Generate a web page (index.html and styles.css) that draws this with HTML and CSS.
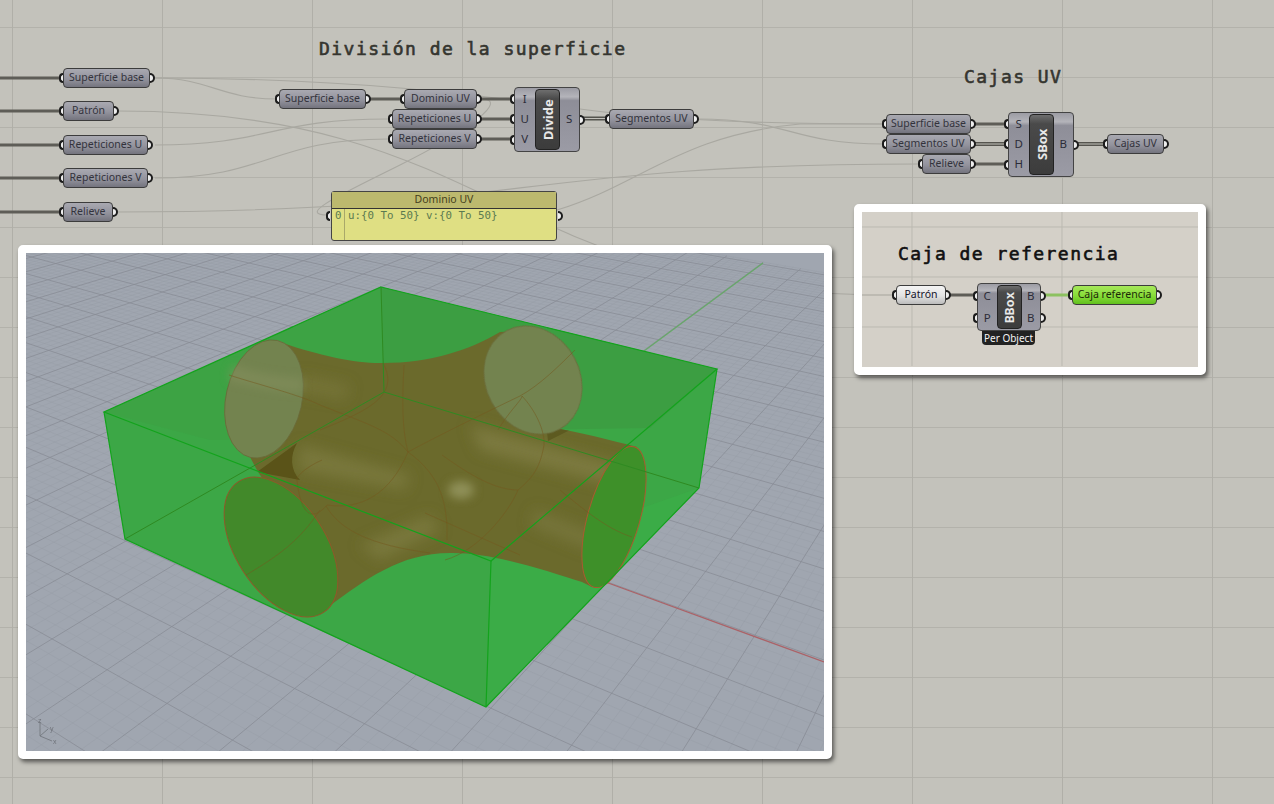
FILE: index.html
```html
<!DOCTYPE html>
<html lang="es">
<head>
    <meta charset="UTF-8">
    <title>Cajas UV</title>
    <link rel="stylesheet" href="styles.css">
</head>
<body>
<div class="canvas">
    <svg class="wires" width="1274" height="804" viewBox="0 0 1274 804">
        <!-- faint wires -->
        <g class="wire-faint">
            <path d="M155 78 C210 78 220 99 277 99"/>
            <path d="M155 78 C350 78 480 95 580 109 C660 120 760 124 884 124"/>
            <path d="M118 111 C500 111 500 295 892 295"/>
            <path d="M155 145 C270 145 270 119 388 119"/>
            <path d="M155 178 C270 178 270 139 388 139"/>
            <path d="M118 212 C520 212 520 164 918 164"/>
            <path d="M481 99 C510 99 470 130 400 165 C340 195 296 215 328 215"/>
            <path d="M698 119 C790 119 790 144 884 144"/>
            <path d="M557 210 C640 185 680 135 800 124 L884 124"/>
        </g>
        <!-- thick wires -->
        <g class="wire-thick">
            <path d="M0 78 H60 M0 111 H60 M0 145 H60 M0 178 H60 M0 212 H60"/>
            <path d="M369 99 H401 M481 99 H511 M481 119 H511 M481 139 H511"/>
            <path d="M975 124 H1005 M975 164 H1005"/>
        </g>
        <g class="wire-list">
            <path d="M583 118.500 H606 M975 144 H1005 M1077 144 H1104"/>
        </g>
        <g class="wire-list-core">
            <path d="M583 118.500 H606 M975 144 H1005 M1077 144 H1104"/>
        </g>
    </svg>

    <h2 class="title title-div">División de la superficie</h2>
    <h2 class="title title-cajas">Cajas UV</h2>

    <div class="node n1">Superficie base</div>
    <div class="node n2">Patrón</div>
    <div class="node n3">Repeticiones U</div>
    <div class="node n4">Repeticiones V</div>
    <div class="node n5">Relieve</div>

    <div class="node n6">Superficie base</div>
    <div class="node n7">Dominio UV</div>
    <div class="node n8">Repeticiones U</div>
    <div class="node n9">Repeticiones V</div>
    <div class="node n10">Segmentos UV</div>

    <div class="comp comp-divide">
        <div class="col col-in"><span class="pin">I</span><span class="pin">U</span><span class="pin">V</span></div>
        <div class="pill">Divide</div>
        <div class="col col-out"><span class="pin">S</span></div>
    </div>

    <div class="yellow">
        <div class="yellow-head">Dominio UV</div>
        <div class="yellow-body"><span class="yellow-num">0</span> u:{0 To 50} v:{0 To 50}</div>
    </div>

    <div class="node n11">Superficie base</div>
    <div class="node n12">Segmentos UV</div>
    <div class="node n13">Relieve</div>
    <div class="node n14">Cajas UV</div>

    <div class="comp comp-sbox">
        <div class="col col-in"><span class="pin">S</span><span class="pin">D</span><span class="pin">H</span></div>
        <div class="pill">SBox</div>
        <div class="col col-out"><span class="pin">B</span></div>
    </div>

    <!-- recuadro caja de referencia -->
    <div class="shot shot-ref">
        <svg class="wires" width="336" height="154" viewBox="862 212 336 154">
            <g class="wire-ref-grid">
                <path d="M862 227 H1198 M862 277 H1198 M862 327 H1198 M912 212 V366 M1062 212 V366"/>
            </g>
            <path class="wire-faint" d="M862 295 H892"/>
            <path class="wire-dark" d="M950 295 H974"/>
            <path class="wire-green" d="M1044 295 H1069"/>
        </svg>
        <h2 class="title title-ref">Caja de referencia</h2>
        <div class="node node-light n15">Patrón</div>
        <div class="comp comp-bbox">
            <div class="col col-in"><span class="pin">C</span><span class="pin">P</span></div>
            <div class="pill pill-bbox">BBox</div>
            <div class="col col-out"><span class="pin">B</span><span class="pin">B</span></div>
        </div>
        <div class="per-object">Per Object</div>
        <div class="node node-green n16">Caja referencia</div>
    </div>

    <!-- vista de rhino -->
    <div class="shot shot-view">
        <svg class="view" width="798" height="498" viewBox="26 253 798 498">
            <defs>
                <filter id="soft" x="-50%" y="-50%" width="200%" height="200%"><feGaussianBlur stdDeviation="7"/></filter>
                <filter id="soft2" x="-50%" y="-50%" width="200%" height="200%"><feGaussianBlur stdDeviation="5"/></filter>
                <clipPath id="body-clip">
                    <path d="M283 343 C320 356 360 364 383 363 C430 363 470 350 500 332 L540 330 L582 380 L548 427 C580 432 610 440 637 447 L640 500 L592 587 L582 582 C545 570 490 552 450 553 C400 553 365 580 328 607 L295 560 L270 510 L262 478 L257 470 L250 457 L235 420 L240 360 Z"/>
                </clipPath>
            </defs>
            <rect x="26" y="253" width="798" height="498" fill="#a0a6b0"/>
            <g id="floor-minor" class="grid-minor"></g>
            <g id="floor-major" class="grid-major"></g>
            <path class="axis-red" d="M600 580 L824 662"/>
            <path class="axis-green" d="M640 354 L763 263"/>

            <!-- caja -->
            <path fill="#3ca746" d="M381 287 L717 369 L699 488 L486 707 L125 539 L104 412 Z"/>
            <path fill="#3c9e42" d="M381 287 L717 369 L650 428 L520 430 L384 392 Z"/>
            <path fill="#3d9f43" d="M381 287 L384 392 L300 440 L210 440 L104 412 Z" opacity=".45"/>
            <path fill="#3bae47" d="M491 561 L699 488 L486 707 Z" opacity=".8"/>

            <!-- cuerpo de los tubos -->
            <path class="tube-body" d="M283 343 C320 356 360 364 383 363 C430 363 470 350 500 332 L540 330 L582 380 L548 427 C580 432 610 440 637 447 L640 500 L592 587 L582 582 C545 570 490 552 450 553 C400 553 365 580 328 607 L295 560 L270 510 L262 478 L257 470 L250 457 L235 420 L240 360 Z"/>
            <g clip-path="url(#body-clip)">
                <g filter="url(#soft)" fill="#7f7d42">
                    <path d="M300 445 L410 475 L405 490 L298 470 Z" opacity=".7"/>
                    <path d="M470 425 L640 470 L630 490 L480 450 Z" opacity=".85"/>
                    <path d="M360 545 L430 515 L440 530 L380 560 Z" opacity=".7"/>
                    <path d="M300 375 L350 385 L345 400 L300 392 Z" opacity=".5"/>
                    <path d="M535 510 L600 535 L590 550 L530 525 Z" opacity=".6"/>
                </g>
                <ellipse cx="461" cy="490" rx="13" ry="9" fill="#8f9058" filter="url(#soft2)"/>
                <path d="M297 443 C290 455 290 470 300 480 L257 472 Z" fill="#5a5318"/>
                <path d="M545 412 L580 425 L548 441 Z" fill="#5d5a20"/>
            </g>

            <!-- bocas -->
            <ellipse class="mouth-back" cx="264" cy="399" rx="38" ry="60" transform="rotate(13 264 399)"/>
            <ellipse class="mouth-back" cx="533" cy="380" rx="47" ry="56" transform="rotate(-28 533 380)"/>
            <ellipse class="mouth-left" cx="281" cy="547" rx="45" ry="78" transform="rotate(-33 281 547)"/>
            <ellipse class="mouth-right" cx="614" cy="517" rx="26" ry="73" transform="rotate(16 614 517)"/>
            <path d="M232 365 C250 372 280 378 303 378 L303 392 C280 392 250 385 228 380 Z" fill="#889260" opacity=".5" filter="url(#soft2)"/>

            <!-- curvas de la superficie -->
            <g class="tube-lines">
                <path d="M229 375 C260 385 300 395 320 405 C370 425 390 430 408 452"/>
                <path d="M320 430 C370 410 400 395 383 363"/>
                <path d="M404 365 C402 400 402 430 408 452 C440 475 445 500 447 525"/>
                <path d="M408 452 C430 440 470 420 520 396 C540 385 560 365 575 350"/>
                <path d="M498 430 C510 410 522 400 522 396 C535 410 545 430 544 445 C540 470 530 480 518 490 C495 490 470 475 442 455"/>
                <path d="M322 460 C300 470 295 480 297 480 C300 510 310 525 327 505 C360 510 390 495 408 452"/>
                <path d="M326 506 C340 530 370 545 430 553"/>
                <path d="M518 490 C510 510 480 550 445 560"/>
                <path d="M425 513 L520 555"/>
                <path d="M246 575 C280 555 300 540 320 510"/>
                <path d="M560 490 C590 515 610 530 632 537"/>
                <path d="M447 525 L447 540" />
            </g>

            <!-- aristas -->
            <g class="box-inner">
                <path d="M381 287 L384 392 M384 392 L125 539 M384 392 L699 488"/>
            </g>
            <g class="box-edge">
                <path d="M381 287 L717 369 L491 561 L104 412 Z"/>
                <path d="M104 412 L125 539 L486 707 L699 488 L717 369 M491 561 L486 707"/>
            </g>

            <!-- eje -->
            <g class="axes">
                <path d="M40 736 V722 M40 736 L48 729 M40 736 L52 741"/>
                <text x="38" y="723">z</text>
                <text x="50" y="731">y</text>
                <text x="53" y="744">x</text>
            </g>
        </svg>
    </div>
</div>
<script src="grid.js"></script>
</body>
</html>
```
FILE: styles.css
```css
html, body {
    margin: 0;
    padding: 0;
    overflow: hidden;
    background: #c3c2bb;
}

.canvas {
    position: relative;
    width: 1274px;
    height: 804px;
    overflow: hidden;
    filter: blur(0.35px);
    font-family: "Noto Sans", Arial, sans-serif;
    background-color: #c3c2bb;
    background-image:
        linear-gradient(to right, #b0afa8 1px, transparent 1px),
        linear-gradient(to bottom, #b3b2ab 1px, transparent 1px);
    background-size: 150px 100%, 100% 50px;
    background-position: 12px 0, 0 27px;
}

.wires {
    position: absolute;
    left: 0;
    top: 0;
}

.wires path, .wire-faint path, .wire-faint {
    fill: none;
}

.wire-faint {
    stroke: #a9a8a1;
    stroke-width: 1.1;
}

.wire-thick path, .wire-dark {
    stroke: #5e5d57;
    stroke-width: 3;
}

.wire-list path {
    stroke: #55544e;
    stroke-width: 4;
}

.wire-list-core path {
    stroke: #c3c2bb;
    stroke-width: 1;
}

.wire-green {
    stroke: #8cc160;
    stroke-width: 3;
}

.wire-ref-grid path {
    stroke: #bbb9b1;
    stroke-width: 1;
}

.title {
    position: absolute;
    margin: 0;
    font-family: "DejaVu Sans Mono", monospace;
    font-size: 18px;
    font-weight: normal;
    line-height: 20px;
    letter-spacing: 1.46px;
    -webkit-text-stroke: 0.6px currentColor;
    color: #35352f;
    white-space: nowrap;
}

.title-div { left: 319px; top: 39px; }
.title-cajas { left: 964px; top: 67px; }
.title-ref { left: 36px; top: 32px; color: #111; }

/* nodos */
.node {
    position: absolute;
    box-sizing: border-box;
    height: 20px;
    padding-bottom: 2px;
    display: flex;
    align-items: center;
    justify-content: center;
    font-size: 10.5px;
    color: #33333c;
    white-space: nowrap;
    border: 1px solid #3c3c3c;
    border-radius: 4px;
    background: linear-gradient(#a9a9b1, #93939d 55%, #74747e);
}

.node::before, .node::after {
    content: "";
    position: absolute;
    top: 3.500px;
    width: 2.500px;
    height: 6px;
    background: #eee;
    border: 2px solid #1c1c1c;
}

.node::before {
    left: -5.500px;
    border-right: none;
    border-radius: 5px 0 0 5px;
}

.node::after {
    right: -5.500px;
    border-left: none;
    border-radius: 0 5px 5px 0;
}

.node-light {
    background: linear-gradient(#f4f4f4, #e2e2e2 55%, #bcbcbc);
    color: #14142a;
}

.node-green {
    background: linear-gradient(#a6e85a, #86dc38 55%, #62c01e);
    color: #1c2a08;
}

.n1 { left: 63px; top: 68px; width: 87px; }
.n2 { left: 63px; top: 101px; width: 51px; }
.n3 { left: 63px; top: 135px; width: 85px; }
.n4 { left: 63px; top: 168px; width: 85px; }
.n5 { left: 63px; top: 202px; width: 50px; }
.n6 { left: 279px; top: 89px; width: 87px; }
.n7 { left: 404px; top: 89px; width: 73px; }
.n8 { left: 392px; top: 109px; width: 85px; }
.n9 { left: 392px; top: 129px; width: 85px; }
.n10 { left: 609px; top: 109px; width: 85px; }
.n11 { left: 886px; top: 114px; width: 85px; }
.n12 { left: 886px; top: 134px; width: 85px; }
.n13 { left: 922px; top: 154px; width: 49px; }
.n14 { left: 1107px; top: 134px; width: 57px; }
.n15 { left: 34px; top: 73px; width: 50px; }
.n16 { left: 210px; top: 73px; width: 85px; }

/* componentes */
.comp {
    position: absolute;
    box-sizing: border-box;
    display: flex;
    font-size: 11.500px;
    color: #2c2c38;
    border: 1px solid #444;
    border-radius: 4px;
    background: linear-gradient(#9c9ca4, #b4b4ba 14%, #8e8e98 20%, #9b9ba5 100%);
}

.comp-divide { left: 514px; top: 87px; width: 66px; height: 65px; }
.comp-sbox { left: 1008px; top: 112px; width: 66px; height: 65px; }
.comp-bbox { left: 115px; top: 71px; width: 64px; height: 48px; z-index: 1; }

.col {
    display: flex;
    flex-direction: column;
    justify-content: space-around;
    align-items: center;
    flex: 1;
    padding-bottom: 2px;
}

.pin {
    position: relative;
    display: block;
    width: 100%;
    text-align: center;
}

.pin::before {
    content: "";
    position: absolute;
    top: 3.500px;
    width: 2.500px;
    height: 6px;
    background: #eee;
    border: 2px solid #1c1c1c;
}

.col-in .pin::before {
    left: -5.500px;
    border-right: none;
    border-radius: 5px 0 0 5px;
}

.col-out .pin::before {
    right: -5.500px;
    border-left: none;
    border-radius: 0 5px 5px 0;
}

.pill {
    box-sizing: border-box;
    width: 25px;
    margin: 1px 0;
    display: flex;
    align-items: center;
    justify-content: center;
    writing-mode: vertical-rl;
    transform: rotate(180deg);
    font-size: 13px;
    font-weight: bold;
    color: #e8e8e8;
    border: 1px solid #222;
    border-radius: 4px;
    background: linear-gradient(#3c3c3c, #4a4a4a 85%, #6e6e6e);
}

.pill-bbox { font-family: "DejaVu Sans Mono", monospace; font-size: 13px; }

.per-object {
    position: absolute;
    left: 120px;
    top: 119px;
    width: 53px;
    height: 14px;
    line-height: 14px;
    text-align: center;
    font-size: 10px;
    color: #f4f4f4;
    background: #222;
    border-radius: 0 0 4px 4px;
}

/* panel amarillo */
.yellow {
    position: absolute;
    left: 331px;
    top: 191px;
    width: 226px;
    height: 50px;
    box-sizing: border-box;
    border: 1px solid #444;
    border-radius: 3px;
    background: linear-gradient(to right, #dfdf83 12px, #a9a86a 12px, #a9a86a 13px, #dfdf83 13px);
}

.yellow::before, .yellow::after {
    content: "";
    position: absolute;
    top: 19px;
    width: 2.500px;
    height: 6px;
    background: #eee;
    border: 2px solid #1c1c1c;
}

.yellow::before { left: -6.500px; border-right: none; border-radius: 5px 0 0 5px; }
.yellow::after { right: -6.500px; border-left: none; border-radius: 0 5px 5px 0; }

.yellow-head {
    height: 16px;
    line-height: 15px;
    text-align: center;
    font-size: 10.500px;
    color: #45401c;
    background: #bcb96e;
    border-bottom: 1px solid #333;
}

.yellow-body {
    padding: 0 0 0 3px;
    font-family: "DejaVu Sans Mono", monospace;
    font-size: 10.800px;
    line-height: 14px;
    color: #5b7a50;
    white-space: pre;
}

/* recuadros */
.shot {
    position: absolute;
    box-sizing: border-box;
    border: 8px solid #fff;
    border-radius: 5px;
    box-shadow: 2px 3px 4px rgba(0, 0, 0, 0.55);
}

.shot-ref {
    left: 854px;
    top: 204px;
    width: 352px;
    height: 171px;
    background: #d4d0c8;
}

.shot-ref .wire-faint { stroke: #a9a8a1; }

.shot-view {
    left: 18px;
    top: 245px;
    width: 814px;
    height: 514px;
    background: #a0a6b0;
}

.view {
    display: block;
}

.grid-minor line {
    stroke: #959aa4;
    stroke-width: 0.6;
    stroke-opacity: 0.55;
}

.grid-major line {
    stroke: #888b94;
    stroke-width: 0.9;
    stroke-opacity: 0.85;
}

.axis-red {
    fill: none;
    stroke: #ab6368;
    stroke-width: 1.300;
}

.axis-green {
    fill: none;
    stroke: #67a869;
    stroke-width: 1.300;
}

.tube-body { fill: #6b6a2c; }

.mouth-back {
    fill: #73834f;
    stroke: #6a6a3a;
    stroke-width: 0.8;
}

.mouth-left {
    fill: #42892a;
    stroke: #8e5a2a;
    stroke-width: 1;
}

.mouth-right {
    fill: #3e9029;
    stroke: #a85c30;
    stroke-width: 1;
}

.tube-lines path {
    fill: none;
    stroke: #75591f;
    stroke-width: 0.7;
    stroke-opacity: 0.75;
}

.box-inner path {
    fill: none;
    stroke: #2f8a22;
    stroke-width: 1;
}

.box-edge path {
    fill: none;
    stroke: #13a31c;
    stroke-width: 1.200;
}

.axes path {
    fill: none;
    stroke: #6f737a;
    stroke-width: 0.8;
}

.axes text {
    font-family: "Liberation Sans", Arial, sans-serif;
    font-size: 7px;
    fill: #6f737a;
}
```
FILE: grid.js
```js
// perspective floor grid, worked out from the two vanishing points
var VU = [-1230, -80], VV = [1185, -50], O = [421.5, 515];
var A = -0.0336, B = 0.05;

function project(i, j) {
    var s = A * i, t = B * j, w = s + t + 1;
    return [(VU[0] * s + VV[0] * t + O[0]) / w, (VU[1] * s + VV[1] * t + O[1]) / w];
}

function addLine(group, p, q) {
    var l = document.createElementNS('http://www.w3.org/2000/svg', 'line');
    l.setAttribute('x1', p[0].toFixed(1));
    l.setAttribute('y1', p[1].toFixed(1));
    l.setAttribute('x2', q[0].toFixed(1));
    l.setAttribute('y2', q[1].toFixed(1));
    group.appendChild(l);
}

var major = document.getElementById('floor-major');
var minor = document.getElementById('floor-minor');
var IMIN = -20, IMAX = 20, JMIN = -20, JMAX = 16.2;

for (var n = IMIN * 5; n <= IMAX * 5; n++) {
    var i = n / 5;
    var jLow = Math.max(JMIN, (0.1 - 1 - A * i) / B);
    if (jLow < JMAX) addLine(n % 5 === 0 ? major : minor, project(i, jLow), project(i, JMAX));
}
for (var m = Math.round(JMIN * 5); m <= JMAX * 5; m++) {
    var j = m / 5;
    var iHigh = Math.min(IMAX, (0.1 - 1 - B * j) / A);
    if (iHigh > IMIN) addLine(m % 5 === 0 ? major : minor, project(IMIN, j), project(iHigh, j));
}
```
